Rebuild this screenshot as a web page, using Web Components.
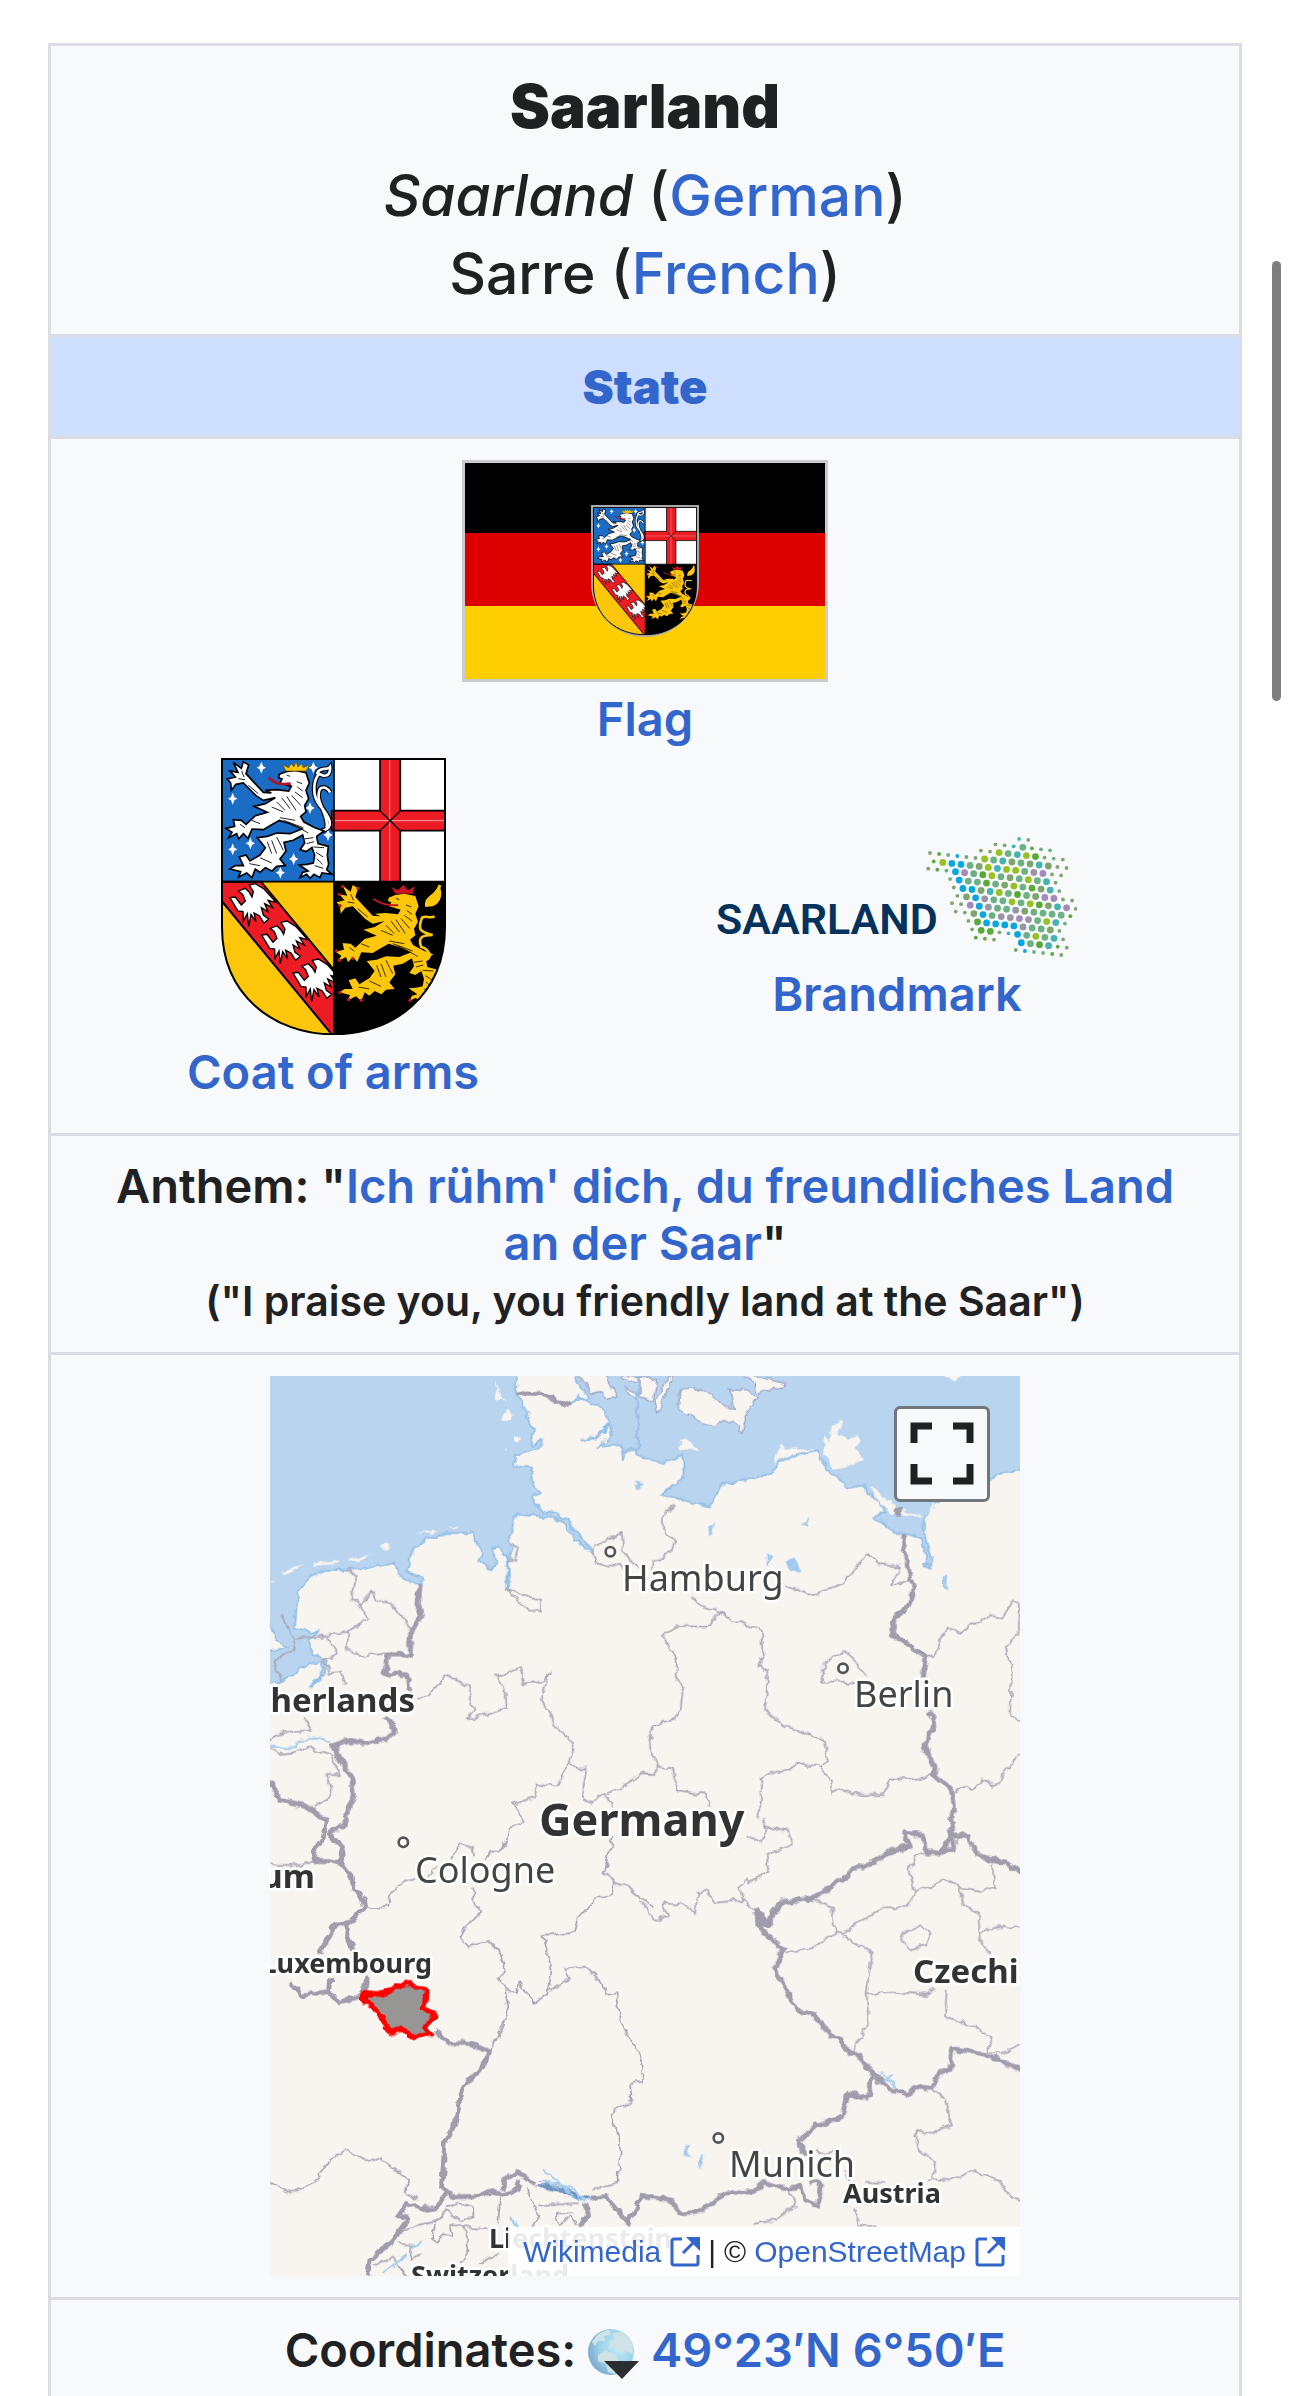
<!DOCTYPE html>
<html lang="en">
<head>
<meta charset="utf-8">
<title>Saarland</title>
<style>
  html {
    --border: #dadde3;
    --surface: #f8f9fb;
    --link: #3366cc;
    --text: #202122;
  }
  body {
    margin: 0;
    background: #fff;
    color: var(--text);
    font-family: Inter, "Liberation Sans", sans-serif;
    font-size: 47px;
    font-weight: 600;
    line-height: 57px;
  }
  a {
    color: var(--link);
    text-decoration: none;
  }
  h1 {
    margin: 0 0 12px;
    font-size: 60px;
    font-weight: 900;
    line-height: 78px;
  }
  .names {
    font-size: 57px;
    font-weight: 500;
    line-height: 78px;
  }
  .state {
    font-weight: 900;
    line-height: 63px;
  }
  .small {
    font-size: 41px;
    line-height: 60px;
  }
</style>
</head>
<body>
<info-box>
  <info-row>
    <h1>Saarland</h1>
    <div class="names"><i>Saarland</i> (<a href="#german">German</a>)</div>
    <div class="names">Sarre (<a href="#french">French</a>)</div>
  </info-row>
  <info-row highlight>
    <a class="state" href="#state">State</a>
  </info-row>
  <info-row>
    <symbol-grid>
      <symbol-figure slot="top">
        <saar-flag></saar-flag>
        <a slot="caption" href="#flag">Flag</a>
      </symbol-figure>
      <symbol-figure>
        <coat-of-arms></coat-of-arms>
        <a slot="caption" href="#arms">Coat of arms</a>
      </symbol-figure>
      <symbol-figure>
        <brand-mark></brand-mark>
        <a slot="caption" href="#brandmark">Brandmark</a>
      </symbol-figure>
    </symbol-grid>
  </info-row>
  <info-row>
    <div>Anthem: "<a href="#anthem">Ich rühm' dich, du freundliches Land an der Saar</a>"</div>
    <div class="small">("I praise you, you friendly land at the Saar")</div>
  </info-row>
  <info-row>
    <locator-map></locator-map>
  </info-row>
  <info-row last>
    Coordinates: <globe-icon></globe-icon> <a href="#coordinates">49°23′N 6°50′E</a>
  </info-row>
</info-box>
<scroll-thumb></scroll-thumb>

<script>
//small base class, clones a template into an open shadow root
class BaseElement extends HTMLElement {
  constructor() {
    super()
    this.attachShadow({ mode: "open" })
    const template = document.createElement("template")
    template.innerHTML = this.constructor.markup
    this.shadowRoot.appendChild(template.content.cloneNode(true))
  }
}

//outer frame, grows to the bottom of the window
class InfoBox extends BaseElement {
  static markup = `
    <style>
      :host {
        display: flex;
        flex-direction: column;
        box-sizing: border-box;
        min-height: 100vh;
        padding: 43px 48px 0;
      }
      section {
        flex: 1;
        display: flex;
        flex-direction: column;
        border: 3px solid var(--border);
        border-top: 0;
        border-bottom: 0;
        background: var(--surface);
        text-align: center;
      }
    </style>
    <section><slot></slot></section>`
}

class InfoRow extends BaseElement {
  static markup = `
    <style>
      :host {
        display: block;
        padding: 21px 39px;
        border-top: 3px solid var(--border);
      }
      :host([highlight]) {
        padding: 18px 39px;
        background: #cddeff;
      }
      :host([last]) {
        flex: 1;
      }
    </style>
    <slot></slot>`
}

//flag on top, two figures side by side below it
class SymbolGrid extends BaseElement {
  static markup = `
    <style>
      :host {
        display: block;
      }
      .pair {
        display: grid;
        grid-template-columns: 1fr 1fr;
        align-items: center;
        margin: 2px -39px 3px;
        padding-right: 60px;
      }
    </style>
    <slot name="top"></slot>
    <div class="pair"><slot></slot></div>`
}

class SymbolFigure extends BaseElement {
  static markup = `
    <style>
      :host {
        display: block;
      }
      figure {
        margin: 0;
        display: flex;
        flex-direction: column;
        align-items: center;
      }
      figcaption {
        line-height: 74px;
      }
    </style>
    <figure>
      <slot></slot>
      <figcaption><slot name="caption"></slot></figcaption>
    </figure>`
}

class CoatOfArms extends BaseElement {
  static markup = `
    <style>
      :host {
        display: block;
        width: 225px;
      }
      svg {
        display: block;
        width: 100%;
      }
    </style>
    <svg viewBox="123 53 675 832" role="img" aria-label="Coat of arms">
      <defs>
        <clipPath id="shield"><path d="M126 56H796V560C796 765 640 883 461 883S126 765 126 560Z"/></clipPath>
        <path id="star" d="M0-18L5-5L14 0L5 5L0 18L-5 5L-14 0L-5-5Z"/>
        <path id="lion" d="M298 102L318 94L345 90L378 97L388 128L378 150L386 175L374 195L378 215L362 228L372 245L405 262L432 272L410 288L414 310L445 318L442 345L446 372L440 388L456 402L426 398L420 412L402 402L390 414L380 402L360 412L368 396L384 392L358 374L380 372L400 368L404 345L396 322L378 334L360 328L374 308L368 284L340 300L312 306L318 332L300 356L316 376L290 378L276 392L256 382L240 396L226 386L216 412L200 398L176 410L182 394L150 386L166 376L190 376L178 350L198 344L210 362L240 344L256 322L232 292L262 288L290 278L330 280L366 266L330 250L298 240L270 256L250 268L216 266L204 294L190 280L176 296L170 280L146 292L156 276L138 264L164 258L160 238L184 240L198 252L226 226L262 216L222 198L256 190L286 172L250 180L228 166L208 146L190 128L168 132L154 150L152 128L142 116L166 110L150 92L174 96L160 66L184 84L190 64L206 74L198 100L222 126L250 156L274 158L256 150L290 148L326 152L334 138L300 128L306 116L296 112Z"/>
        <path id="tail" d="M424 272C470 262 444 224 420 196C396 168 398 118 420 98M440 262C448 226 410 190 416 160C418 134 440 138 450 156M412 98C420 78 440 92 450 80C452 98 444 108 430 106Z"/>
        <g id="fur" fill="none" stroke-width="3">
          <path d="M350 124L366 130M352 140L368 152M345 155L368 172M335 165L362 195M320 168L348 210M305 172L330 205M290 185L315 210M275 200L310 215M300 232L345 240M310 240L370 262M325 245L385 278M372 296L400 292M380 310L402 304M400 320L432 322M408 336L430 350M410 355L428 372M404 376L430 384M290 290L310 330M275 300L290 340M262 305L275 340M240 352L275 368M208 370L240 376M205 135L235 160M175 115L195 118M185 92L192 110M180 252L195 262M215 240L240 250M320 104L330 108"/>
        </g>
        <path id="bird" d="M150 472L166 470L184 494L196 482L188 462L176 452L196 444L208 456L216 470L220 454L208 434L226 430L252 446L288 486L264 480L278 502L254 490L264 514L244 502L250 524L266 536L252 548L238 526L222 518L228 544L213 522L206 558L202 520L190 542L189 514L174 512Z"/>
      </defs>
      <g clip-path="url(#shield)">
        <path fill="#1a6cc4" d="M126 56h336v368H126z"/>
        <path fill="#fff" d="M462 56h336v368H462z"/>
        <path fill="#fcc60b" d="M126 424h336v460H126z"/>
        <!-- cross of Trier -->
        <path fill="#ed1c24" stroke="#000" stroke-width="5" d="M600 50V211H455V271H600V430H661V271H805V211H661V50Z"/>
        <path stroke="#f7a5a8" stroke-width="3" d="M629 56V424M462 241H798"/>
        <path stroke="#000" stroke-width="4" d="M600 211L661 271M661 211L600 271"/>
        <!-- bend with three eagles -->
        <path fill="#ed1c24" stroke="#000" stroke-width="6" d="M120 424H243L470 698V900L120 476Z"/>
        <g fill="#fff" stroke="#000" stroke-width="4">
          <use href="#bird"/>
          <use href="#bird" x="95" y="112"/>
          <use href="#bird" x="189" y="226"/>
        </g>
        <path d="M461 424h336v460H461z"/>
        <!-- silver lion -->
        <g fill="#fff">
          <use href="#star" x="244" y="82"/><use href="#star" x="158" y="175"/>
          <use href="#star" x="400" y="82"/><use href="#star" x="390" y="203"/>
          <use href="#star" x="211" y="309"/><use href="#star" x="158" y="327"/>
          <use href="#star" x="341" y="356"/><use href="#star" x="301" y="397"/>
          <use href="#star" x="444" y="284"/>
        </g>
        <g fill="none">
          <use href="#tail" stroke="#000" stroke-width="15"/>
          <use href="#tail" stroke="#fff" stroke-width="8"/>
        </g>
        <use href="#lion" fill="#fff" stroke="#000" stroke-width="5"/>
        <use href="#fur" stroke="#222"/>
        <path fill="none" stroke="#b01228" stroke-width="8" d="M332 130C300 134 285 130 266 112"/>
        <path fill="#fcc60b" stroke="#6b5200" stroke-width="2" d="M318 92L308 74L326 82L334 70L342 80L348 64L354 80L364 70L370 82L388 74L378 92Z"/>
        <!-- golden lion -->
        <g transform="translate(328 370)">
          <path fill="none" stroke="#fcc60b" stroke-width="8" d="M378 288C440 300 424 256 396 250C384 220 400 214 430 214C388 204 386 196 398 162C412 154 420 166 436 158M408 126C430 120 440 104 452 64"/>
          <path fill="#fcc60b" d="M408 130C402 96 432 100 448 64C462 84 458 118 430 128Z"/>
          <use href="#lion" fill="#fcc60b"/>
          <use href="#fur" stroke="#3b2f00"/>
          <path fill="none" stroke="#c81424" stroke-width="6" d="M326 124C300 128 275 120 252 106"/>
          <path fill="#c81424" d="M318 90L306 70L326 80L342 64L356 80L376 68L370 90Z"/>
          <g fill="#c81424">
            <circle cx="160" cy="68" r="5"/><circle cx="206" cy="74" r="5"/><circle cx="150" cy="92" r="5"/><circle cx="152" cy="126" r="5"/>
            <circle cx="142" cy="262" r="5"/><circle cx="150" cy="290" r="5"/><circle cx="190" cy="284" r="5"/>
            <circle cx="152" cy="386" r="5"/><circle cx="178" cy="408" r="5"/><circle cx="216" cy="410" r="5"/>
            <circle cx="362" cy="410" r="5"/><circle cx="390" cy="412" r="5"/><circle cx="420" cy="410" r="5"/>
          </g>
        </g>
        <path stroke="#000" stroke-width="5" d="M126 424H798M462 56V884"/>
      </g>
      <path fill="none" stroke="#000" stroke-width="6" d="M126 56H795V560C795 765 640 882 461 882S126 765 126 560Z"/>
    </svg>`
}

class SaarFlag extends BaseElement {
  static markup = `
    <style>
      :host {
        display: grid;
        justify-items: center;
        align-items: center;
        box-sizing: border-box;
        width: 366px;
        height: 222px;
        border: 3px solid #c8ccd1;
        background: linear-gradient(#000 70px, #d00 70px 143px, #ffce00 143px);
      }
      .shield {
        box-sizing: border-box;
        width: 108px;
        padding: 2px;
        border-radius: 0 0 54px 54px;
        background: #aaa;
      }
      coat-of-arms {
        width: 104px;
      }
    </style>
    <div class="shield"><coat-of-arms></coat-of-arms></div>`
}

//one entry per row of dots: [row, first column, dots], capitals are big dots
const DOT_ROWS = [
  [-3, 11, "cm"],
  [-2, 8, "mmcGdgg"],
  [-1, 6, "mmLGCLDmgm"],
  [0, 0, "mdgbmmLGCMGMCMmm"],
  [1, 0, "dLBBGMLCLLGYVmm"],
  [2, -1, "mdgBVGDLGMGLGCm"],
  [3, 1, "gBGGDGMLGDMCm"],
  [4, 1, "mBBMCLGDGMVVmm"],
  [5, 1, "mMBYGGLGLDMCVm"],
  [6, 0, "mmVBYGGYMGGGGd"],
  [7, 0, "mmMBGYYVYGLCg"],
  [8, 1, "mDBBBBYGGMm"],
  [9, 1, "mDDmcBGLGCm"],
  [10, 1, "ddm  BGDCdm"],
  [11, 5, "mbggdm"]
]
const DOT_COLORS = {
  b: "#0ba6e0", c: "#45b3b0", g: "#6bb184", l: "#97c11f",
  d: "#57aa38", m: "#7ea56c", v: "#a488c0", y: "#9a95a5"
}

class BrandMark extends BaseElement {
  static markup = `
    <style>
      :host {
        display: block;
        width: 360px;
      }
      svg {
        display: block;
        width: 100%;
      }
      text {
        font: 600 43px Roboto, "Liberation Sans", sans-serif;
        fill: #05325c;
      }
    </style>
    <svg viewBox="0 0 360 120" role="img" aria-label="Saarland brandmark">
      <text x="-1" y="97">SAARLAND</text>
      <g></g>
    </svg>`

  connectedCallback() {
    const group = this.shadowRoot.querySelector("g")
    group.innerHTML = DOT_ROWS.map(([row, first, dots]) =>
      [...dots].map((dot, i) => {
        if (dot === " ") return ""
        const column = first + i
        const x = (639 + 27.3 * column + 11 * row) / 3
        const y = (48 + 3 * column + 25.1 * row) / 3
        const big = dot === dot.toUpperCase()
        return `<circle cx="${x.toFixed(1)}" cy="${y.toFixed(1)}" r="${big ? 3.4 : 1.9}" fill="${DOT_COLORS[dot.toLowerCase()]}"/>`
      }).join("")
    ).join("")
  }
}

class LocatorMap extends BaseElement {
  static markup = `
    <style>
      :host {
        display: block;
        position: relative;
        width: 750px;
        margin: 0 auto;
      }
      .map {
        display: block;
        width: 100%;
        overflow: hidden;
      }
      .land {
        fill: #f8f5f0;
      }
      .sea {
        fill: #b8d4ee;
      }
      .coast {
        stroke: #8fbce6;
        stroke-width: 5;
      }
      .lake {
        fill: #a3cbee;
      }
      .river {
        fill: none;
        stroke: #a3cbee;
        stroke-width: 6;
      }
      .thin, .thick {
        fill: none;
        stroke-linejoin: round;
      }
      .thin {
        stroke: #aaa4b2;
        stroke-width: 5;
      }
      .thick {
        stroke: #a09cab;
        stroke-width: 15;
      }
      .dot {
        fill: #fff;
        stroke: #555;
        stroke-width: 8;
      }
      text {
        font-family: "Noto Sans", sans-serif;
        font-weight: 400;
        font-size: 36px;
        fill: #444;
        stroke: #fff;
        stroke-width: 5;
        stroke-linejoin: round;
        paint-order: stroke;
      }
      .country {
        font-weight: 700;
        font-size: 33px;
        fill: #333;
      }
      .minor {
        font-size: 27px;
      }
      .major {
        font-size: 45px;
      }
      button {
        position: absolute;
        top: 30px;
        right: 30px;
        width: 96px;
        height: 96px;
        padding: 0;
        border: 3px solid #72777d;
        border-radius: 6px;
        background: #f8f9fa;
      }
      button svg {
        display: block;
        margin: auto;
      }
      .attribution {
        position: absolute;
        right: 0;
        bottom: 0;
        display: flex;
        align-items: center;
        gap: 8px;
        padding: 0 15px;
        background: rgba(255, 255, 255, 0.9);
        font: 400 30px/49px "Liberation Sans", sans-serif;
      }
      .attribution a {
        display: flex;
        align-items: center;
        gap: 9px;
        color: var(--link);
        text-decoration: none;
      }
    </style>
    <svg class="map" viewBox="0 0 750 900" role="img" aria-label="Map of Germany with Saarland marked">
      <defs>
        <filter id="rough" x="0" y="0" width="2250" height="2700" filterUnits="userSpaceOnUse">
          <feTurbulence type="fractalNoise" baseFrequency="0.035" numOctaves="2" seed="4"/>
          <feDisplacementMap in="SourceGraphic" scale="24" xChannelSelector="R" yChannelSelector="G"/>
        </filter>
      </defs>
      <rect class="land" width="750" height="900"/>
      <svg viewBox="0 0 2250 2700" width="750" height="900">
        <g filter="url(#rough)">
        <!-- north west -->
        <g transform="translate(-30 -18)">
          <path class="sea coast" d="M-30 -30L770 -30L768 70L800 130L822 180L812 225L848 212L835 232L768 255L765 290L812 292L818 345L842 370L816 380L820 400L845 425L895 432L925 450L955 500L1000 543L985 541L945 512L905 448L860 442L780 430L760 450L748 490L748 520L755 535L745 570L748 650L742 655L740 560L715 530L695 535L708 580L690 598L655 570L672 555L640 492L560 492L490 510L458 535L440 610L488 622L485 650L450 635L415 615L405 580L290 598L200 600L150 622L115 660L105 770L150 785L175 785L150 810L155 855L200 870L195 905L150 950L180 930L190 880L150 880L60 935L-30 960L-30 855L85 830L50 810L20 740L-30 740Z"/>
          <path class="sea coast" d="M925 98L960 80L1000 105L1035 120L1050 160L1000 205L960 212L1010 208L1050 165L1055 195L1020 230L1085 225L1088 272L1095 240L1140 240L1175 255L1175 -20L930 -20L965 50L985 85Z"/>
          <path class="land" stroke="#8a93ba" stroke-width="3" d="M945 0L1035 0L1065 80L1040 85L1020 65L990 75L975 40ZM1095 48L1140 80L1170 85L1140 100L1110 75ZM1075 15L1170 20L1170 60L1130 40Z"/>
          <path class="land" d="M705 30L722 80L740 85L712 88ZM725 130L745 122L762 135L755 150L728 150ZM762 205L780 195L788 208L770 218ZM705 150L722 175L712 160ZM735 225L745 240L738 240ZM62 610L100 590L135 585L70 615ZM155 580L215 575L240 570L225 582L160 588ZM258 570L310 560L340 548L300 572L262 578ZM365 525L390 525L375 542ZM385 515L450 500ZM468 490L540 480L520 490ZM550 472L600 465L590 473ZM30 635L50 630L30 642Z"/>
          <path class="lake" d="M1120 340L1145 335L1135 360Z"/>
          <path class="river" stroke-width="3" d="M30 1130L100 1135L120 1110L170 1105L215 1120"/>
          <path class="thin" d="M65 735L105 810L160 800L200 795L265 785L320 745L300 705L272 690L290 620L265 598M300 705L330 665L365 695L395 700L450 775M105 810L100 840L40 875L65 935M200 795L235 855L190 870L210 910L245 905L258 950M265 785L260 840L310 860L375 850M475 983L500 980L560 915L630 950L630 1000L645 1020L620 1050L740 1015L735 945L705 920L780 895L790 940L850 935L870 905L845 985L885 1070L940 1120L925 1185L980 1195L965 1280L995 1300L1030 1270L1060 1310M1040 1270L1100 1245L1140 1210L1170 1215M925 1185L890 1250L830 1240L825 1280L760 1305L795 1350M755 525L775 530L765 570L745 570M742 655L840 690L840 725L805 725L742 655M1000 543L1005 520L1040 515L1085 485L1090 545L1135 595M1000 545L1010 580L1050 590L1075 580L1090 597M130 1040L155 1085L70 1085L30 1115M30 1135L60 1155L100 1150L140 1130L215 1155L240 1215L200 1215L215 1275L160 1310"/>
          <path class="thick" d="M770 68L830 70L880 85L905 105L935 92M480 645L475 700L485 740L455 785L450 855L380 855L375 910L440 915L452 960M375 1040L405 1080L385 1105L320 1120L260 1110L220 1130L240 1170L275 1220L280 1280L250 1350M0 1220L30 1240L60 1290L130 1305L200 1350"/>
        </g>
        <!-- north east -->
        <g transform="translate(1110 -18)">
          <path class="sea coast" d="M-6 -30L1180 -30L1180 290L1140 300L1090 312L1040 330L885 400L870 435L855 440L855 500L875 560L870 590L850 585L862 560L845 505L800 490L760 485L700 440L735 425L720 400L685 375L680 345L620 355L600 330L560 305L540 260L530 240L470 255L420 275L402 300L345 325L250 342L210 412L185 405L110 385L65 375L130 320L130 255L60 280L-6 250Z"/>
          <path class="land" stroke="#8a93ba" stroke-width="3" d="M120 60L190 55L240 95L280 120L270 55L320 60L350 85L320 130L305 190L285 155L240 155L220 175L115 115ZM95 10L95 30L55 130L45 95ZM290 0L345 18L435 40L430 55L400 52L350 75L345 40ZM0 20L50 30L40 90L0 80Z"/>
          <path class="land" d="M120 205L145 208L178 242L120 238ZM885 0L965 0L950 42ZM550 245L555 190L570 215L575 165L612 152L590 195L620 208L650 190L662 212L640 235L672 270L620 285L580 300ZM415 220L440 235L530 235L470 250L420 265L400 290ZM690 345L740 385L775 415L860 440L885 390L875 440L800 435L755 430L700 380Z"/>
          <path class="lake" d="M205 475L225 463L218 490L208 500ZM485 465L510 442L500 465ZM378 555L398 560L385 592ZM440 575L460 562L482 605L450 600ZM908 620L922 612L918 660L908 655Z"/>
          <path class="thin" d="M100 405L68 440L70 485L105 510L95 545L40 580L38 610M435 645L520 675L610 640L640 600L690 555L715 585L780 590L755 645L815 630M155 680L180 705L240 725L280 750L365 780L370 850L355 890L385 905L375 1020L430 1070L555 1110L560 1170L540 1190L490 1180L365 1220L355 1350M240 725L210 770L120 768L68 795L110 865L110 920L130 960L125 1020L100 1050L35 1065L30 1130L50 1190L45 1215L0 1212M50 1190L95 1195L115 1260L195 1275L212 1310M540 1190L570 1230L575 1272L610 1260L640 1275L730 1275L755 1225L800 1228L882 1215M855 860L885 850L920 775L960 785L1050 735L1090 740L1120 690L1140 700L1135 790L1100 830L1115 910L1110 1030L1150 1060M940 1270L975 1250L1000 1260L1030 1225L1060 1250L1110 1190L1150 1140M545 935L550 880L600 850L630 850L655 890L680 920M545 935L605 935L645 940"/>
          <path class="thick" d="M775 410L775 440M785 490L800 580L822 645L805 710L762 745L757 790L855 860L850 925M870 1025L885 1060L855 1130L885 1190L882 1220L930 1250L940 1310L935 1352"/>
        </g>
        <!-- south west -->
        <g transform="translate(-30 1332)">
          <path class="thin" d="M165 120L120 135L60 135L30 130M315 265L385 260L390 225L430 185L465 178M500 165L530 140M575 120L600 70L635 85L640 110M795 0L785 12L750 20L745 60L715 95L690 95L670 120M640 200L640 240L665 280L615 320L600 350L625 380L690 362L715 390L735 455L718 475L735 510L745 560L730 610L690 697M735 510L770 520L775 490L815 530L820 555L865 520L875 450L850 345L945 335L955 295L1000 240L1055 220L1065 185L1030 160L1060 50M1065 190L1110 205L1180 265M865 510L930 475L915 445L975 440L1020 480L1040 525L1070 520L1085 620L1140 700L1150 785L1110 790L1115 840L1050 880L1080 970L1075 1090L1000 1110M30 1085L90 1120L165 1085L210 1020L255 990L330 1025L360 1015L445 1080L440 1115L470 1140"/>
          <path class="thin" d="M415 1240L470 1215L530 1205L560 1170L600 1200L640 1190L640 1160L600 1150L560 1160M530 1205L515 1250L530 1270L550 1245L580 1250L570 1215L680 1225M610 1215L625 1300L600 1330M720 1130L715 1210M800 1105L835 1190L815 1220M835 1160L930 1150L960 1150M890 1180L900 1215L930 1190L950 1215M890 1180L940 1180M340 1340L400 1310L440 1370M410 1270L455 1275L450 1320L485 1300M660 1330L720 1300"/>
          <path class="thick" d="M200 0L185 60L160 95L175 125L235 125L275 165L280 205L310 240L315 265L270 305L220 320L195 370L180 400M270 0L210 40L250 85L235 125M262 310L260 350L280 390M325 470L305 530L240 545L205 515L125 525L90 485M210 475L205 515M525 630L570 670L630 670L690 697L665 745L610 800L585 910L555 970L545 1100L575 1130L640 1130L700 1115L730 1125L770 1110L780 1080M730 1110L730 1080L770 1055L825 1090M990 1135L1040 1130L1080 1180L1105 1210L1145 1125L1180 1130M560 1115L530 1165L480 1165L440 1150L415 1190L445 1195L400 1260L330 1320L322 1372M975 1150L985 1180L960 1220"/>
          <path fill="#6f94c4" d="M820 1098L860 1090L920 1105L970 1128L1000 1138L960 1143L900 1112Z"/>
          <path class="river" d="M835 1080L900 1095L940 1105L975 1145L940 1130L900 1090L855 1055M365 1360L410 1330L440 1300M455 1285L485 1262M400 1340L440 1305M752 1190L775 1220"/>
          <path fill="#979695" stroke="#f00" stroke-width="16" stroke-linejoin="round" d="M314 518L364 523L404 503L438 490L498 512L493 562L524 583L498 612L512 645L450 650L430 627L390 637L354 572L314 542Z"/>
        </g>
        <!-- south east -->
        <g transform="translate(1110 1332)">
          <path class="thin" d="M365 0L380 25L365 65L320 50M375 15L440 35L455 75L380 105L385 155L330 190L320 175L298 200L310 240L225 248L200 205L172 220L165 285L140 255L70 250L85 290L45 300L0 245M310 235L345 270M525 240L575 260L585 340L515 385L440 400M585 340L610 345L640 315L735 262L805 260L825 215L805 150L830 110L860 100M825 215L925 178L960 205L1020 215L1065 200L1055 130M960 205L970 250L1015 285L1020 360L1045 400M1020 335L1075 322L1150 322M610 350L695 395L680 520L685 600L640 690M680 520L760 515L865 525L880 505M920 505L915 590L1000 620L1055 655L1045 700M1045 700L1085 700L1150 670M780 345L840 318L875 345L860 375L805 388ZM880 810L915 840L935 915L870 940L830 930L830 980L885 1025L880 1075M865 1078L930 1080L1005 1050L1080 1085L1110 1130L1150 1142M445 1105L465 1155L410 1200L340 1212M530 985L550 1000L580 995M615 1050L625 1080M680 1085L735 1090M645 1165L655 1215L705 1220"/>
          <path class="lake" d="M135 970L145 975L152 1012L138 1008ZM188 998L188 1048L172 1035Z"/>
          <path class="river" stroke-width="3" d="M720 755L745 780L775 805M730 785L755 765"/>
          <path class="thick" d="M940 0L930 50L900 100L855 95L850 45L790 35L810 75L720 110L700 130L640 145L620 170L560 210L515 235L430 245L400 275L385 315L345 275L365 330L430 390L405 450L430 490L455 545L485 578L520 580L570 645L600 660L630 700L650 700L695 755L745 805L805 825L825 800L875 805L900 755L930 750L935 685L1000 695L1090 725L1160 755M695 755L690 820L675 835L625 820L605 890L530 915L475 965L500 1005M930 45L980 45L1015 110L1100 130L1160 175M900 95L940 90L940 50M0 1130L90 1140L120 1180L190 1170L250 1120L350 1110L370 1085L430 1105L480 1100L500 1140L530 1158L545 1100L535 1082L505 1085"/>
          <path stroke="#a09cab" stroke-width="24" d="M342 270L382 312"/>
        </g>
        </g>
        <g class="dot">
          <circle cx="1021" cy="527" r="14"/>
          <circle cx="400" cy="1399" r="14"/>
          <circle cx="1719" cy="877" r="14"/>
          <circle cx="1345" cy="2286" r="14"/>
        </g>
      </svg>
      <text x="352" y="215">Hamburg</text>
      <text x="584" y="331">Berlin</text>
      <text x="145" y="507">Cologne</text>
      <text x="459" y="801">Munich</text>
      <text class="country major" x="269" y="460">Germany</text>
      <text class="country" x="145" y="336" text-anchor="end">Netherlands</text>
      <text class="country" x="45" y="512" text-anchor="end">Belgium</text>
      <text class="country" x="643" y="607">Czechia</text>
      <text class="country minor" x="162" y="597" text-anchor="end">Luxembourg</text>
      <text class="country minor" x="573" y="827">Austria</text>
      <text class="country minor" x="219" y="872">Liechtenstein</text>
      <text class="country minor" x="141" y="909">Switzerland</text>
    </svg>
    <button type="button" aria-label="View full screen">
      <svg width="64" height="64" viewBox="0 0 64 64" fill="none" stroke="#202122" stroke-width="7">
        <path d="M4 21V4H22M43 4H60V21M60 42V59H43M22 59H4V42"/>
      </svg>
    </button>
    <div class="attribution">
      <a href="#wikimedia">Wikimedia <external-icon></external-icon></a>
      <span>|</span>
      <span>©</span>
      <a href="#osm">OpenStreetMap <external-icon></external-icon></a>
    </div>`
}

class ExternalIcon extends BaseElement {
  static markup = `
    <style>
      :host {
        display: block;
      }
      svg {
        display: block;
      }
    </style>
    <svg width="30" height="30" viewBox="0 0 30 30" fill="none" stroke="#3366cc" stroke-width="3">
      <path d="M12 2H4Q2 2 2 4V26Q2 28 4 28H26Q28 28 28 26V18M13 16L25 4"/>
      <path fill="#3366cc" stroke="none" d="M16 0H30V14Z"/>
    </svg>`
}

class GlobeIcon extends BaseElement {
  static markup = `
    <style>
      :host {
        display: inline-block;
        vertical-align: -12px;
      }
      svg {
        display: block;
      }
    </style>
    <svg width="51" height="51" viewBox="0 0 51 51">
      <defs>
        <radialGradient id="water" cx=".65" cy=".4" r=".65">
          <stop offset="0" stop-color="#c3ebf7"/>
          <stop offset=".6" stop-color="#9fd3ea"/>
          <stop offset="1" stop-color="#7fadd2"/>
        </radialGradient>
      </defs>
      <circle cx="23" cy="24" r="23" fill="url(#water)"/>
      <path fill="#cfe3e6" d="M4 14Q11 3 21 2L23 7L16 8L17 13L10 13L7 18ZM24 6L34 4L44 14L45 26L38 23L32 25L24 19L20 21L22 13L27 11ZM10 27L17 23L27 26L31 33L27 46L20 44L18 36L10 33Z"/>
      <path fill="#2b2f31" d="M16 33H51L34 51Z"/>
    </svg>`
}

//page scroll indicator, floats over the right margin
class ScrollThumb extends BaseElement {
  static markup = `
    <style>
      :host {
        position: fixed;
        top: 261px;
        right: 9px;
        width: 9px;
        height: 440px;
        border-radius: 5px;
        background: #7f7f7f;
      }
    </style>`
}

customElements.define("info-box", InfoBox)
customElements.define("info-row", InfoRow)
customElements.define("symbol-grid", SymbolGrid)
customElements.define("symbol-figure", SymbolFigure)
customElements.define("coat-of-arms", CoatOfArms)
customElements.define("saar-flag", SaarFlag)
customElements.define("brand-mark", BrandMark)
customElements.define("external-icon", ExternalIcon)
customElements.define("locator-map", LocatorMap)
customElements.define("globe-icon", GlobeIcon)
customElements.define("scroll-thumb", ScrollThumb)
</script>
</body>
</html>
